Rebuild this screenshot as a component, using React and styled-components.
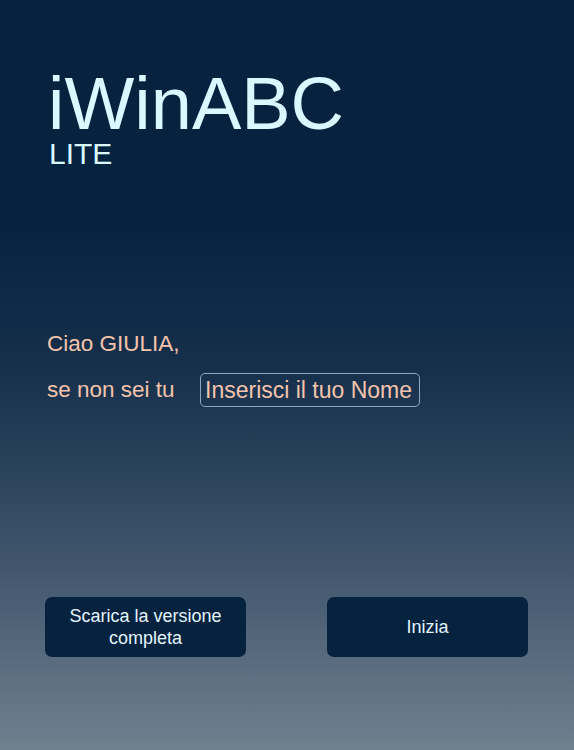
import React from "react";
import styled, { createGlobalStyle } from "styled-components";

const GlobalStyle = createGlobalStyle`
  html, body { margin: 0; padding: 0; }
  body {
    font-family: "Liberation Sans", Arial, sans-serif;
    background: #6e7e8f;
  }
`;

const Page = styled.div`
  box-sizing: border-box;
  width: 100%;
  min-height: 750px;
  padding: 74px 0 0 0;
  display: flex;
  flex-direction: column;
  background: linear-gradient(
    to bottom,
    #05233f 0%,
    #05233f 30%,
    #17304c 50%,
    #40556c 75%,
    #70808f 100%
  );
`;

const Header = styled.header`
  display: flex;
  flex-direction: column;
  gap: 5px;
  padding-left: 48px;
  color: #d9f8ff;
`;

const Title = styled.h1`
  margin: 0;
  font-weight: 400;
  font-size: 74px;
  line-height: 60px;
  letter-spacing: 0;
`;

const Subtitle = styled.div`
  font-size: 30px;
  line-height: 30px;
  padding-left: 1px;
`;

const Greeting = styled.section`
  margin-top: 164px;
  padding-left: 47px;
  display: flex;
  flex-direction: column;
  gap: 18px;
  color: #f5c4ac;
  font-size: 22.5px;
`;

const Hello = styled.div`
  line-height: 22px;
`;

const Row = styled.div`
  display: flex;
  align-items: center;
`;

const Label = styled.span`
  line-height: 34px;
  width: 153px;
`;

const NameInput = styled.input`
  box-sizing: border-box;
  width: 220px;
  height: 34px;
  margin: 0;
  padding: 0 4px;
  border: 1px solid #8ea6bf;
  border-radius: 5px;
  background: transparent;
  font-family: "Liberation Sans", Arial, sans-serif;
  font-size: 23px;
  line-height: 32px;
  color: #f5c4ac;
  outline: none;
  &::placeholder {
    color: #f5c4ac;
    opacity: 1;
  }
`;

const Actions = styled.div`
  margin-top: 190px;
  padding-left: 45px;
  display: flex;
  gap: 81px;
`;

const Button = styled.button`
  box-sizing: border-box;
  width: 201px;
  height: 60px;
  margin: 0;
  padding: 0 10px;
  border: none;
  border-radius: 7px;
  background: #05233f;
  color: #e4f4fc;
  font-family: "Liberation Sans", Arial, sans-serif;
  font-size: 18px;
  line-height: 22px;
  text-align: center;
  cursor: pointer;
`;

export default function App() {
  return (
    <>
      <GlobalStyle />
      <Page>
        <Header>
          <Title>iWinABC</Title>
          <Subtitle>LITE</Subtitle>
        </Header>
        <Greeting>
          <Hello>Ciao GIULIA,</Hello>
          <Row>
            <Label>se non sei tu</Label>
            <NameInput placeholder="Inserisci il tuo Nome" />
          </Row>
        </Greeting>
        <Actions>
          <Button>
            Scarica la versione
            <br />
            completa
          </Button>
          <Button>Inizia</Button>
        </Actions>
      </Page>
    </>
  );
}
